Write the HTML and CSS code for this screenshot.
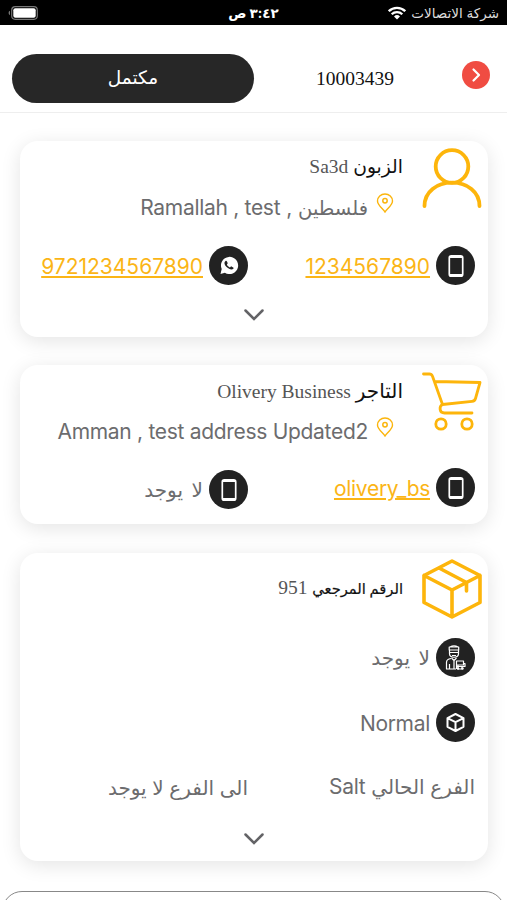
FILE: index.html
```
<!DOCTYPE html>
<html lang="ar" dir="rtl">

<head>
    <meta charset="UTF-8">
    <title>10003439</title>
    <link rel="stylesheet" href="styles.css">
</head>

<body>
    <svg width="0" height="0" class="defs">
        <symbol id="phone" viewBox="0 0 39 39">
            <circle cx="19.5" cy="19.5" r="19.5" fill="#222" />
            <rect x="13.3" y="9.800" width="13.400" height="20.400" rx="2" fill="none" stroke="#fff" stroke-width="1.700" />
            <path d="M13.500 11h13M13.500 29h13" stroke="#fff" stroke-width="2" />
        </symbol>
        <symbol id="pin" viewBox="0 0 18 20">
            <path d="M9 19C7.500 16 1.500 12.500 1.500 8a7.500 7 0 0 1 15 0c0 4.500-6 8-7.500 11z" fill="none" stroke="#fbb50d" stroke-width="1.400" />
            <circle cx="9" cy="7.800" r="2.200" fill="none" stroke="#fbb50d" stroke-width="1.500" />
        </symbol>
        <symbol id="down" viewBox="0 0 20 12">
            <path d="M1.500 1.500L10 10l8.500-8.500" fill="none" stroke="#636366" stroke-width="2.500" stroke-linecap="round" />
        </symbol>
    </svg>

    <div class="status-bar">
        <div class="carrier">
            <span class="carrier-name">شركة الاتصالات</span>
            <svg width="18" height="14" viewBox="0 0 18 14">
                <g fill="none" stroke="#fff" stroke-width="2.300">
                    <path d="M.8 5.200a11.700 11.700 0 0 1 16.400 0" />
                    <path d="M3.700 8.300a7.600 7.600 0 0 1 10.600 0" />
                </g>
                <path d="M9 13.500l-3-3a4.300 4.300 0 0 1 6 0z" fill="#fff" />
            </svg>
        </div>
        <div class="clock">٣:٤٢ ص</div>
        <svg class="battery" width="30" height="14" viewBox="0 0 30 14">
            <rect x="3.700" y=".7" width="25.600" height="12.600" rx="3.500" fill="none" stroke="#777" stroke-width="1.200" />
            <rect x="5.300" y="2.300" width="22.400" height="9.400" rx="2" fill="#fff" />
            <path d="M2 4.800v4.400a2.400 2.400 0 0 1 0-4.400z" fill="#777" />
        </svg>
    </div>

    <div class="header">
        <svg class="back" width="28" height="28" viewBox="0 0 28 28">
            <circle cx="14" cy="14" r="14" fill="#f04c42" />
            <path d="M11.500 8.500l5.500 5.500-5.500 5.500" fill="none" stroke="#fff" stroke-width="2.200" stroke-linecap="round" stroke-linejoin="round" />
        </svg>
        <div class="order-id">10003439</div>
        <div class="state">مكتمل</div>
    </div>

    <div class="card customer">
        <div class="card-head">
            <svg width="60" height="60" viewBox="0 0 60 60" fill="none" stroke="#fdb50b" stroke-width="3.800" stroke-linecap="round">
                <circle cx="30" cy="18.500" r="16.300" />
                <path d="M2.500 58c0-14.500 12.500-23.300 27.500-23.300s27.500 8.800 27.500 23.300" />
            </svg>
            <div class="info">
                <div class="title"><b>الزبون</b> <span>Sa3d</span></div>
                <div class="address"><svg width="18" height="20"><use href="#pin" /></svg><span><i class="ar">فلسطين</i> , <bdi class="en">Ramallah , test</bdi></span></div>
            </div>
        </div>
        <div class="contacts">
            <div class="contact"><svg width="39" height="39"><use href="#phone" /></svg><a class="num">1234567890</a></div>
            <div class="contact">
                <svg width="39" height="39" viewBox="0 0 39 39">
                    <circle cx="19.500" cy="19.500" r="19.500" fill="#222" />
                    <path d="M11.500 28l1.200-5a8.600 8.600 0 1 1 3.200 3.700z" fill="#fff" />
                    <path d="M16.500 15c-2 1.500-.7 4.500 1.400 6.300s5 3.200 6.600 1.200c.6-.8 0-1-2-2.100-.7-.3-1 1-1.600 1-.9-.2-2.800-1.800-3-2.700 0-.5 1-1 .7-1.700-.6-1.600-.9-2.700-2.100-2z" fill="#222" />
                </svg>
                <a class="num">9721234567890</a>
            </div>
        </div>
        <svg class="more" width="20" height="12"><use href="#down" /></svg>
    </div>

    <div class="card business">
        <div class="card-head">
            <svg width="60" height="60" viewBox="0 0 60 60" fill="none" stroke="#fdb50b" stroke-width="2.800" stroke-linecap="round" stroke-linejoin="round">
                <path d="M1.500 2h6q2 0 3 2.300L20.500 32.500M13 9.500l45 1-4.500 16q-.7 2.500-3.500 2.800l-29.500 3.200c-3.500 1.500-3.500 8.500 2 8.500H50" />
                <circle cx="19" cy="52" r="5.200" />
                <circle cx="45" cy="52" r="5.200" />
            </svg>
            <div class="info">
                <div class="title"><b class="wide">التاجر</b> <span>Olivery Business</span></div>
                <div class="address"><svg width="18" height="20"><use href="#pin" /></svg><span class="en">Amman , test address Updated2</span></div>
            </div>
        </div>
        <div class="contacts">
            <div class="contact"><svg width="39" height="39"><use href="#phone" /></svg><a class="en">olivery_bs</a></div>
            <div class="contact lower"><svg width="39" height="39"><use href="#phone" /></svg><span class="none">لا يوجد</span></div>
        </div>
    </div>

    <div class="card package">
        <div class="card-head">
            <svg width="60" height="60" viewBox="0 0 60 60" fill="none" stroke="#fdb50b" stroke-width="3.600" stroke-linecap="round" stroke-linejoin="round">
                <path d="M30 2l28 14.500v27L30 58 2 43.500v-27zM2 16.500L30 31l28-14.500M30 31v27M17 9l27.500 14.500V32" />
            </svg>
            <div class="info">
                <div class="title"><b class="narrow">الرقم المرجعي</b> <span>951</span></div>
            </div>
        </div>
        <div class="contact">
            <svg width="39" height="39" viewBox="0 0 39 39">
                <circle cx="19.500" cy="19.500" r="19.500" fill="#222" />
                <g fill="none" stroke="#fff" stroke-width="1.200" stroke-linejoin="round">
                    <path d="M13.200 9h9.500v3h-9.500zM13.500 12v3.500c0 5 9 5 9 0V12M13.500 14.500h9M14 9q4-2.500 8 0M16 17.500h4" />
                    <path d="M15.500 20l2.500 2.500 2.500-2.500M15 20.500q-4.500.5-4.500 4V31H20M13.500 26v5M18 22.500V31" />
                    <path d="M20.500 23h7v4h-7zM20.500 25v6M27.500 25.500h1.500v3h-8" />
                    <path d="M22 27v4h4v-3" />
                </g>
                <circle cx="22" cy="30.500" r="1.200" fill="#fff" />
                <circle cx="26.500" cy="30.500" r="1.200" fill="#fff" />
            </svg>
            <span class="none">لا يوجد</span>
        </div>
        <div class="contact">
            <svg width="39" height="39" viewBox="0 0 39 39">
                <circle cx="19.500" cy="19.500" r="19.500" fill="#222" />
                <path d="M19.500 11l8 4.200v8.600l-8 4.200-8-4.200v-8.600zM11.500 15.200l8 4 8-4M19.500 19.200V28" fill="none" stroke="#fff" stroke-width="2" stroke-linejoin="round" />
            </svg>
            <span class="en">Normal</span>
        </div>
        <div class="branches">
            <div><span class="branch">الفرع الحالي</span> <span class="en">Salt</span></div>
            <div class="to"><span class="branch">الى الفرع لا يوجد</span></div>
        </div>
        <svg class="more" width="20" height="12"><use href="#down" /></svg>
    </div>

    <div class="next-box"></div>
</body>

</html>
```
FILE: styles.css
```
body {
    margin: 0;
    height: 900px;
    overflow: hidden;
    background: #fff;
    color: #6c6c6e;
    font-family: Inter, "DejaVu Sans", sans-serif;
    font-size: 21px;
}

svg {
    display: block;
    flex-shrink: 0;
}

.defs {
    position: absolute;
}

.status-bar {
    display: grid;
    grid-template-columns: 1fr auto 1fr;
    align-items: center;
    box-sizing: border-box;
    height: 25px;
    padding: 1px 8px 0;
    background: #000;
    color: #fff;
}

.carrier {
    display: flex;
    align-items: center;
    gap: 5px;
}

.carrier-name {
    font-size: 13.5px;
    color: #ddd;
}

.clock {
    font-size: 13.5px;
    font-weight: bold;
}

.battery {
    justify-self: end;
}

.header {
    display: flex;
    align-items: center;
    box-sizing: border-box;
    height: 88px;
    padding: 0 17px 0 12px;
    border-bottom: 1px solid #eee;
}

.back {
    margin-top: 13px;
}

.order-id {
    margin: 20px 68px 0 auto;
    font-family: "Liberation Serif", serif;
    font-size: 19.5px;
    color: #111;
}

.state {
    width: 242px;
    height: 49px;
    margin-top: 20px;
    border-radius: 25px;
    background: #272727;
    color: #fff;
    font-size: 18.5px;
    line-height: 46px;
    text-align: center;
}

.card {
    box-sizing: border-box;
    width: 468px;
    margin: 28px 19px 0 20px;
    border-radius: 18px;
    box-shadow: 0 4px 20px rgba(0, 0, 0, 0.11);
}

.customer {
    height: 196px;
}

.business {
    height: 159px;
}

.package {
    height: 308px;
    margin-top: 29px;
}

.card-head {
    display: flex;
    gap: 19px;
    padding: 7px 6px 0 0;
}

.title {
    height: 38px;
    line-height: 38px;
    font-family: "Liberation Serif", "DejaVu Sans", serif;
    font-size: 19.5px;
    color: #555;
}

.title b {
    font-size: 18.7px;
    font-weight: normal;
    color: #111;
}

.title .wide {
    font-size: 20px;
}

.title .narrow {
    font-size: 14.7px;
    -webkit-text-stroke: 0.2px #111;
}

.address {
    display: flex;
    gap: 8px;
    height: 42px;
    margin-right: 9px;
    line-height: 44px;
}

.address svg {
    margin-top: 7px;
}

.en {
    letter-spacing: -0.3px;
}

.ar {
    font-size: 19.5px;
    font-style: normal;
}

.none {
    font-size: 20px;
    word-spacing: 3px;
}

.contacts {
    display: flex;
    margin-top: 18px;
}

.contact {
    display: flex;
    gap: 6px;
    width: 227px;
    height: 39px;
    line-height: 41px;
    margin-right: 13px;
}

.contacts .contact + .contact {
    margin-right: 0;
}

.contact a {
    color: #fbb516;
    text-decoration: underline;
    text-decoration-thickness: 1.5px;
    text-underline-offset: 2px;
}

.lower {
    margin-top: 2px;
}

.more {
    margin: 24px auto 0;
}

.business .contacts {
    margin-top: 16px;
}

.package .card-head {
    height: 79px;
    padding-top: 6px;
}

.package .title {
    margin-top: 10px;
}

.package .contact + .contact {
    margin-top: 26px;
}

.branches {
    display: flex;
    height: 40px;
    margin: 25px 13px 0 0;
    line-height: 40px;
}

.branches div {
    width: 227px;
}

.branch {
    font-size: 20px;
}

.branches .to {
    padding-top: 1px;
}

.package .more {
    margin-top: 26px;
}

.next-box {
    height: 40px;
    margin: 30px 2px 0;
    border: 1px solid #888;
    border-radius: 20px;
}
```
